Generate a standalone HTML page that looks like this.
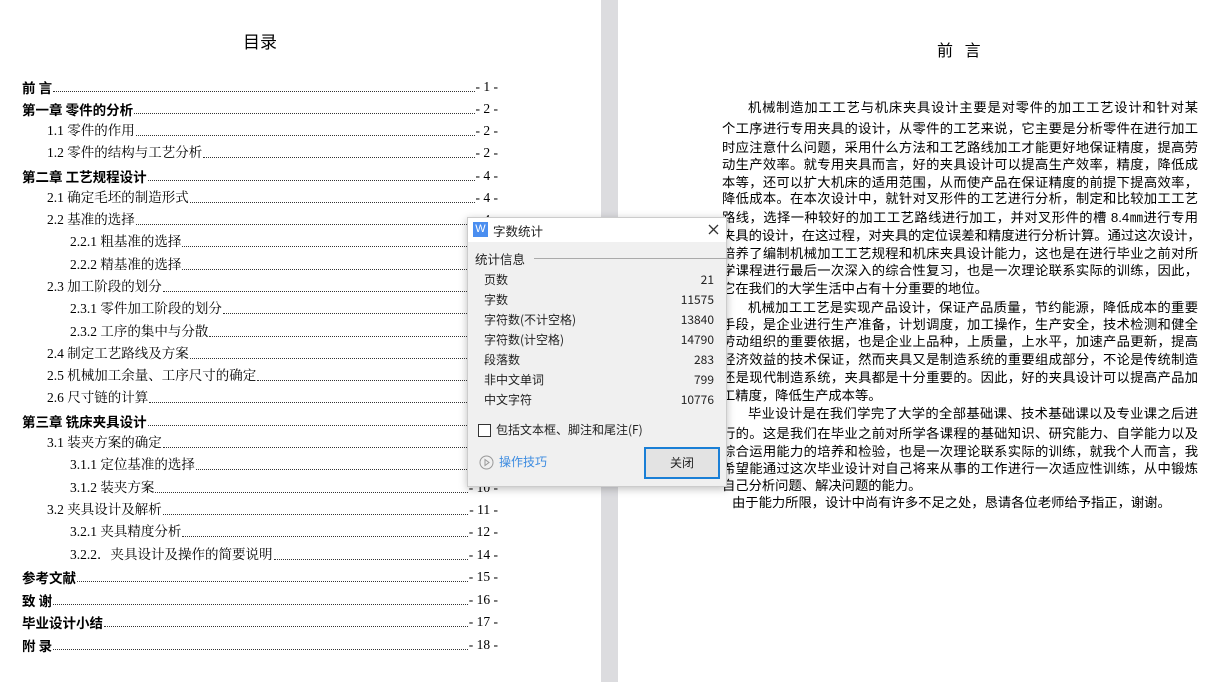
<!DOCTYPE html>
<html><head><meta charset="utf-8"><style>
*{margin:0;padding:0;box-sizing:border-box}
body{width:1219px;height:682px;overflow:hidden;background:#fff;position:relative;font-family:"Liberation Serif","Noto Serif CJK SC","Noto Sans CJK SC",serif;color:#000}
.gut{position:absolute;left:601px;top:0;width:17px;height:682px;background:#dcdcdf}
.t{position:absolute;left:0;width:498px;height:20px;font-size:13.5px;line-height:20px;display:flex;white-space:nowrap}
.t .d{flex:1;border-bottom:1px dotted #333;margin:0 1px 5px 1px}
.t b{font-weight:bold;font-family:"Noto Sans CJK SC",sans-serif}
.r{position:absolute;left:722px;width:476px;font-family:"Liberation Sans","Noto Sans CJK SC",sans-serif;font-size:13.3px;line-height:18px;white-space:nowrap;overflow:hidden;text-align:justify;text-align-last:justify}
.dlg{position:absolute;left:467px;top:217px;width:260px;height:270px;background:#f0f0f0;border:1px solid #ccc;box-shadow:0 2px 8px rgba(0,0,0,.25);font-family:"Noto Sans CJK SC",sans-serif;font-size:12px;color:#222}
.dlg .tb{height:24px;background:#fff;position:relative}
.row{position:absolute;left:16px;width:230px;display:flex;justify-content:space-between;font-size:12px;line-height:16px}
</style></head><body>
<div class="gut"></div>
<div style="position:absolute;left:243px;top:28px;font-size:17px;font-family:'Noto Sans CJK SC',sans-serif">目录</div>

<div class="t" style="top:77px;padding-left:22px"><b>前 言</b><span class="d"></span>- 1 -</div>
<div class="t" style="top:99px;padding-left:22px"><b>第一章 零件的分析</b><span class="d"></span>- 2 -</div>
<div class="t" style="top:121px;padding-left:47px">1.1 零件的作用<span class="d"></span>- 2 -</div>
<div class="t" style="top:143px;padding-left:47px">1.2 零件的结构与工艺分析<span class="d"></span>- 2 -</div>
<div class="t" style="top:166px;padding-left:22px"><b>第二章 工艺规程设计</b><span class="d"></span>- 4 -</div>
<div class="t" style="top:188px;padding-left:47px">2.1 确定毛坯的制造形式<span class="d"></span>- 4 -</div>
<div class="t" style="top:210px;padding-left:47px">2.2 基准的选择<span class="d"></span>- 4 -</div>
<div class="t" style="top:232px;padding-left:70px">2.2.1 粗基准的选择<span class="d"></span>- 5 -</div>
<div class="t" style="top:255px;padding-left:70px">2.2.2 精基准的选择<span class="d"></span>- 5 -</div>
<div class="t" style="top:277px;padding-left:47px">2.3 加工阶段的划分<span class="d"></span>- 5 -</div>
<div class="t" style="top:299px;padding-left:70px">2.3.1 零件加工阶段的划分<span class="d"></span>- 5 -</div>
<div class="t" style="top:322px;padding-left:70px">2.3.2 工序的集中与分散<span class="d"></span>- 6 -</div>
<div class="t" style="top:344px;padding-left:47px">2.4 制定工艺路线及方案<span class="d"></span>- 6 -</div>
<div class="t" style="top:366px;padding-left:47px">2.5 机械加工余量、工序尺寸的确定<span class="d"></span>- 7 -</div>
<div class="t" style="top:388px;padding-left:47px">2.6 尺寸链的计算<span class="d"></span>- 8 -</div>
<div class="t" style="top:411px;padding-left:22px"><b>第三章 铣床夹具设计</b><span class="d"></span>- 9 -</div>
<div class="t" style="top:433px;padding-left:47px">3.1 装夹方案的确定<span class="d"></span>- 9 -</div>
<div class="t" style="top:455px;padding-left:70px">3.1.1 定位基准的选择<span class="d"></span>- 9 -</div>
<div class="t" style="top:478px;padding-left:70px">3.1.2 装夹方案<span class="d"></span>- 10 -</div>
<div class="t" style="top:500px;padding-left:47px">3.2 夹具设计及解析<span class="d"></span>- 11 -</div>
<div class="t" style="top:522px;padding-left:70px">3.2.1 夹具精度分析<span class="d"></span>- 12 -</div>
<div class="t" style="top:545px;padding-left:70px">3.2.2．夹具设计及操作的简要说明<span class="d"></span>- 14 -</div>
<div class="t" style="top:567px;padding-left:22px"><b>参考文献</b><span class="d"></span>- 15 -</div>
<div class="t" style="top:590px;padding-left:22px"><b>致 谢</b><span class="d"></span>- 16 -</div>
<div class="t" style="top:612px;padding-left:22px"><b>毕业设计小结</b><span class="d"></span>- 17 -</div>
<div class="t" style="top:635px;padding-left:22px"><b>附 录</b><span class="d"></span>- 18 -</div>

<div style="position:absolute;left:937px;top:37px;font-size:16px;font-family:'Noto Sans CJK SC',sans-serif;letter-spacing:4px">前 言</div>

<div class="r" style="top:99px;left:748px;width:450px">机械制造加工工艺与机床夹具设计主要是对零件的加工工艺设计和针对某</div>
<div class="r" style="top:120px">个工序进行专用夹具的设计，从零件的工艺来说，它主要是分析零件在进行加工</div>
<div class="r" style="top:139px">时应注意什么问题，采用什么方法和工艺路线加工才能更好地保证精度，提高劳</div>
<div class="r" style="top:156px">动生产效率。就专用夹具而言，好的夹具设计可以提高生产效率，精度，降低成</div>
<div class="r" style="top:174px">本等，还可以扩大机床的适用范围，从而使产品在保证精度的前提下提高效率，</div>
<div class="r" style="top:190px">降低成本。在本次设计中，就针对叉形件的工艺进行分析，制定和比较加工工艺</div>
<div class="r" style="top:209px">路线，选择一种较好的加工工艺路线进行加工，并对叉形件的槽 8.4㎜进行专用</div>
<div class="r" style="top:227px">夹具的设计，在这过程，对夹具的定位误差和精度进行分析计算。通过这次设计，</div>
<div class="r" style="top:245px">培养了编制机械加工工艺规程和机床夹具设计能力，这也是在进行毕业之前对所</div>
<div class="r" style="top:262px">学课程进行最后一次深入的综合性复习，也是一次理论联系实际的训练，因此，</div>
<div class="r" style="top:280px;text-align-last:left">它在我们的大学生活中占有十分重要的地位。</div>
<div class="r" style="top:299px;left:748px;width:450px">机械加工工艺是实现产品设计，保证产品质量，节约能源，降低成本的重要</div>
<div class="r" style="top:316px">手段，是企业进行生产准备，计划调度，加工操作，生产安全，技术检测和健全</div>
<div class="r" style="top:333px">劳动组织的重要依据，也是企业上品种，上质量，上水平，加速产品更新，提高</div>
<div class="r" style="top:351px">经济效益的技术保证，然而夹具又是制造系统的重要组成部分，不论是传统制造</div>
<div class="r" style="top:369px">还是现代制造系统，夹具都是十分重要的。因此，好的夹具设计可以提高产品加</div>
<div class="r" style="top:387px;text-align-last:left">工精度，降低生产成本等。</div>
<div class="r" style="top:405px;left:748px;width:450px">毕业设计是在我们学完了大学的全部基础课、技术基础课以及专业课之后进</div>
<div class="r" style="top:425px">行的。这是我们在毕业之前对所学各课程的基础知识、研究能力、自学能力以及</div>
<div class="r" style="top:443px">综合运用能力的培养和检验，也是一次理论联系实际的训练，就我个人而言，我</div>
<div class="r" style="top:460px">希望能通过这次毕业设计对自己将来从事的工作进行一次适应性训练，从中锻炼</div>
<div class="r" style="top:477px;text-align-last:left">自己分析问题、解决问题的能力。</div>
<div class="r" style="top:494px;left:732px;width:466px;text-align-last:left">由于能力所限，设计中尚有许多不足之处，恳请各位老师给予指正，谢谢。</div>

<div class="dlg">
 <div class="tb">
  <div style="position:absolute;left:5px;top:4px;width:15px;height:15px;background:#4a8ef0;color:#fff;font-size:11px;line-height:15px;text-align:center;font-family:'Liberation Sans',sans-serif">W</div>
  <div style="position:absolute;left:25px;top:3px;font-size:12.5px">字数统计</div>
  <svg style="position:absolute;left:240px;top:6px" width="11" height="11"><path d="M1 1L10 10M10 1L1 10" stroke="#333" stroke-width="1.3"/></svg>
 </div>
 <div style="position:absolute;left:7px;top:31px;font-size:12.5px">统计信息</div>
 <div style="position:absolute;left:66px;top:40px;width:195px;border-top:1px solid #aaa"></div>
 <div class="row" style="top:54px"><span>页数</span><span>21</span></div>
 <div class="row" style="top:74px"><span>字数</span><span>11575</span></div>
 <div class="row" style="top:94px"><span>字符数(不计空格)</span><span>13840</span></div>
 <div class="row" style="top:114px"><span>字符数(计空格)</span><span>14790</span></div>
 <div class="row" style="top:134px"><span>段落数</span><span>283</span></div>
 <div class="row" style="top:154px"><span>非中文单词</span><span>799</span></div>
 <div class="row" style="top:174px"><span>中文字符</span><span>10776</span></div>
 <div style="position:absolute;left:10px;top:206px;width:13px;height:13px;border:1px solid #333;background:#fff"></div>
 <div style="position:absolute;left:28px;top:203px">包括文本框、脚注和尾注(F)</div>
 <svg style="position:absolute;left:11px;top:237px" width="15" height="15"><circle cx="7.5" cy="7.5" r="6.5" fill="none" stroke="#999"/><path d="M6 4.5L10 7.5L6 10.5Z" fill="none" stroke="#999"/></svg>
 <div style="position:absolute;left:31px;top:235px;color:#3c8be0">操作技巧</div>
 <div style="position:absolute;left:176px;top:229px;width:76px;height:32px;border:2px solid #1a7fd6;background:#e3e3e3;text-align:center;line-height:28px">关闭</div>
</div>
</body></html>
